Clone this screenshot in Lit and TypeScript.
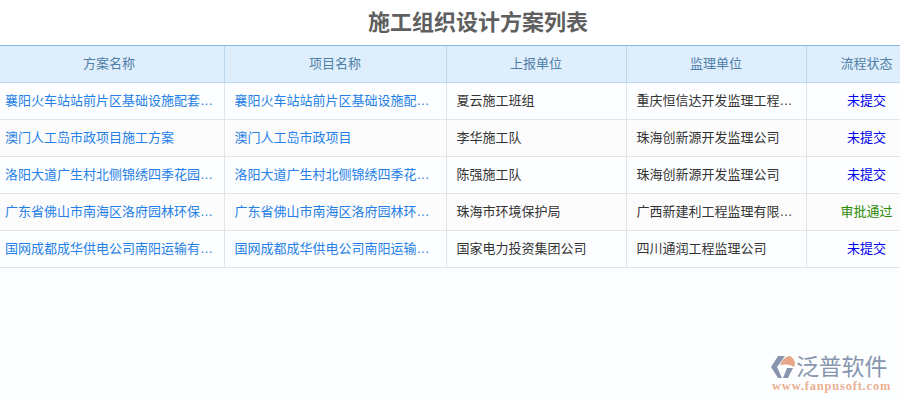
import { LitElement, html, css } from "lit";
import { customElement } from "lit/decorators.js";

const rows = [
  ["襄阳火车站站前片区基础设施配套工程施工方案", "襄阳火车站站前片区基础设施配套工程项目", "夏云施工班组", "重庆恒信达开发监理工程有限公司", "未提交"],
  ["澳门人工岛市政项目施工方案", "澳门人工岛市政项目", "李华施工队", "珠海创新源开发监理公司", "未提交"],
  ["洛阳大道广生村北侧锦绣四季花园施工方案", "洛阳大道广生村北侧锦绣四季花园项目", "陈强施工队", "珠海创新源开发监理公司", "未提交"],
  ["广东省佛山市南海区洛府园林环保工程施工方案", "广东省佛山市南海区洛府园林环保工程", "珠海市环境保护局", "广西新建利工程监理有限公司", "审批通过"],
  ["国网成都成华供电公司南阳运输有限公司施工方案", "国网成都成华供电公司南阳运输项目", "国家电力投资集团公司", "四川通润工程监理公司", "未提交"],
];

@customElement("app-root")
export class AppRoot extends LitElement {
  static styles = css`
    :host {
      display: block;
      position: relative;
      width: 900px;
      height: 400px;
      overflow: hidden;
      background: #fdfeff;
      font-family: "Liberation Sans", "Noto Sans CJK SC", sans-serif;
      font-size: 13px;
    }
    .title {
      height: 39px;
      display: flex;
      align-items: center;
      justify-content: center;
      padding: 0 0 6px 56px;
      font-size: 22px;
      font-weight: 700;
      color: #5f5f5f;
      background: #fff;
    }
    .table {
      width: 933px;
      margin-left: -5px;
      border-top: 1px solid #84b7e3;
    }
    .row {
      display: grid;
      grid-template-columns: 230px 222px 180px 180px 121px;
      height: 37px;
      box-sizing: border-box;
      border-bottom: 1px solid #e3e4e8;
    }
    .row.head {
      background: #deeefc;
      border-bottom: 1px solid #bcd8f0;
    }
    .row.alt { background: #fdfcfd; }
    .cell {
      box-sizing: border-box;
      padding: 0 10px 0 9.5px;
      line-height: 35px;
      white-space: nowrap;
      overflow: hidden;
      text-overflow: ellipsis;
      border-right: 1px solid #e3e4e8;
      color: #333;
    }
    .cell:first-child { padding-left: 10px; }
    .head .cell, .head .cell:first-child {
      padding: 0 10.5px 0 9.5px;
      text-align: center;
      line-height: 36px;
      color: #4f7ea8;
      border-right-color: #bcd8f0;
    }
    .cell.link { color: #2480e6; }
    .cell.status { padding: 0 11px 0 9px; text-align: center; border-right: none; }
    .blue { color: #0000f0; }
    .green { color: #2a8a00; }
    .logo {
      position: absolute;
      left: 770px;
      top: 353px;
      width: 124px;
      height: 40px;
    }
    .logo svg { position: absolute; left: 0; top: 0; }
    .brand {
      position: absolute;
      left: 26px;
      top: 0;
      font-size: 23px;
      line-height: 28px;
      letter-spacing: -0.2px;
      color: #8796ae;
      white-space: nowrap;
    }
    .url {
      position: absolute;
      left: 2px;
      top: 25px;
      font-family: "Liberation Serif", serif;
      font-size: 12.5px;
      line-height: 16px;
      letter-spacing: 0.8px;
      font-weight: 700;
      color: #e9b193;
      white-space: nowrap;
    }
  `;

  render() {
    return html`
      <div class="title">施工组织设计方案列表</div>
      <div class="table">
        <div class="row head">
          ${["方案名称", "项目名称", "上报单位", "监理单位", "流程状态"].map(
            (h) => html`<div class="cell">${h}</div>`
          )}
        </div>
        ${rows.map(
          (r, i) => html`
            <div class="row ${i % 2 ? "alt" : ""}">
              <div class="cell link">${r[0]}</div>
              <div class="cell link">${r[1]}</div>
              <div class="cell">${r[2]}</div>
              <div class="cell">${r[3]}</div>
              <div class="cell status ${r[4] === "未提交" ? "blue" : "green"}">${r[4]}</div>
            </div>
          `
        )}
      </div>
      <div class="logo">
        <svg width="28" height="28" viewBox="0 0 28 28">
          <path d="M8 3 H15 L7 14 L12 25 H8 L1 14 Z" fill="#8796ae" />
          <path d="M10 12 C12 7 16 3 20 3 C25 6 26 11 24 14 C20 11 15 11 10 12 Z" fill="#e8a688" />
          <path d="M13 25 L17 15 H23 L18 25 Z" fill="#8796ae" />
        </svg>
        <div class="brand">泛普软件</div>
        <div class="url">www.fanpusoft.com</div>
      </div>
    `;
  }
}
